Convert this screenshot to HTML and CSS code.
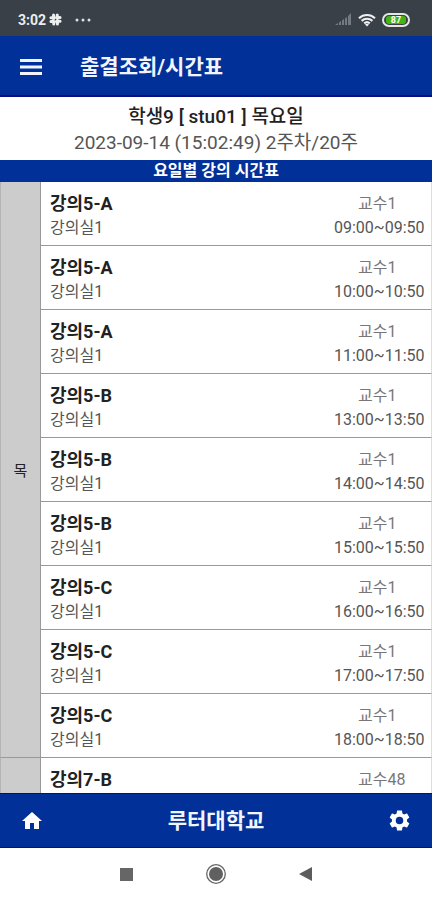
FILE: index.html
```html
<!DOCTYPE html>
<html lang="ko">
<head>
<meta charset="utf-8">
<meta name="viewport" content="width=device-width, initial-scale=1">
<title>출결조회/시간표</title>
<link rel="stylesheet" href="styles.css">
</head>
<body>
<div class="app">
  <div class="status">
    <span class="clock">3:02</span>
    <svg class="slack" viewBox="0 0 12 12" width="13" height="13" fill="none" stroke="#eceef0" stroke-width="2.8" stroke-linecap="round"><path d="M4.2 1.8v3.4M1.8 4.4h2.600M7.800 6.800v3.400M7.800 7.600h2.400M6.800 4.200h3.400M7.600 1.800v2.400M1.800 7.800h3.400M4.400 7.800v2.400"/></svg>
    <svg class="dots" viewBox="0 0 16 4" width="16" height="4" fill="#dfe2e4"><circle cx="2" cy="2" r="1.5"/><circle cx="8" cy="2" r="1.5"/><circle cx="14" cy="2" r="1.5"/></svg>
    <span class="indicators">
      <svg viewBox="0 0 17 13" width="17" height="13" fill="#747b80"><path d="M0 12l3-2v2zM4 9.500l2-1.500v4H4zM7 7.500l2-1.500v6H7zM10 5.500l2-1.500v8h-2zM13 3l3-3v12h-3z"/></svg>
      <svg viewBox="0 0 18 14" width="18" height="14" fill="none" stroke="#eef0f1" stroke-width="2.100"><path d="M1 5.200c4.600-4.200 11.400-4.200 16 0M3.600 7.900c3.100-2.800 7.700-2.800 10.800 0M6.200 10.400c1.600-1.400 4-1.400 5.600 0"/><path d="M9 13.500l-2-2c1.200-1 2.800-1 4 0z" fill="#eef0f1" stroke="none"/></svg>
      <span class="battery"><span class="charge">87</span></span>
    </span>
  </div>
  <header class="topbar">
    <button class="icon-button" type="button" aria-label="메뉴"><svg viewBox="0 0 22 16" width="22" height="16" fill="#f2f5ff"><path d="M0 0h22v3H0zM0 6.500h22v3H0zM0 13h22v3H0z"/></svg></button>
    <h1>출결조회/시간표</h1>
  </header>
  <main>
    <section class="student">
      <p class="name">학생9 [ stu01 ] 목요일</p>
      <p class="date">2023-09-14 (15:02:49) 2주차/20주</p>
    </section>
    <h2>요일별 강의 시간표</h2>
    <div class="schedule">
    <table>
      <tbody>
        <tr><th scope="rowgroup" rowspan="9"><span class="day">목</span></th><td><div class="lecture"><div><b>강의5-A</b><span>강의실1</span></div><div class="when"><span class="prof">교수1</span><span>09:00~09:50</span></div></div></td></tr>
        <tr><td><div class="lecture"><div><b>강의5-A</b><span>강의실1</span></div><div class="when"><span class="prof">교수1</span><span>10:00~10:50</span></div></div></td></tr>
        <tr><td><div class="lecture"><div><b>강의5-A</b><span>강의실1</span></div><div class="when"><span class="prof">교수1</span><span>11:00~11:50</span></div></div></td></tr>
        <tr><td><div class="lecture"><div><b>강의5-B</b><span>강의실1</span></div><div class="when"><span class="prof">교수1</span><span>13:00~13:50</span></div></div></td></tr>
        <tr><td><div class="lecture"><div><b>강의5-B</b><span>강의실1</span></div><div class="when"><span class="prof">교수1</span><span>14:00~14:50</span></div></div></td></tr>
        <tr><td><div class="lecture"><div><b>강의5-B</b><span>강의실1</span></div><div class="when"><span class="prof">교수1</span><span>15:00~15:50</span></div></div></td></tr>
        <tr><td><div class="lecture"><div><b>강의5-C</b><span>강의실1</span></div><div class="when"><span class="prof">교수1</span><span>16:00~16:50</span></div></div></td></tr>
        <tr><td><div class="lecture"><div><b>강의5-C</b><span>강의실1</span></div><div class="when"><span class="prof">교수1</span><span>17:00~17:50</span></div></div></td></tr>
        <tr><td><div class="lecture"><div><b>강의5-C</b><span>강의실1</span></div><div class="when"><span class="prof">교수1</span><span>18:00~18:50</span></div></div></td></tr>
      </tbody>
      <tbody>
        <tr><th scope="rowgroup"></th><td><div class="lecture"><div><b>강의7-B</b></div><div class="when"><span class="prof">교수48</span></div></div></td></tr>
      </tbody>
    </table>
    </div>
  </main>
  <footer class="bottombar">
    <button class="icon-button" type="button" aria-label="홈"><svg viewBox="2 3 20 17" width="20" height="17" fill="#fff"><path d="M10 20v-6h4v6h5v-8h3L12 3 2 12h3v8z"/></svg></button>
    <strong>루터대학교</strong>
    <button class="icon-button" type="button" aria-label="설정"><svg viewBox="2 2 20 20" width="21" height="21" fill="#fff"><path d="M19.140 12.940c.04-.3.060-.61.060-.94 0-.32-.02-.64-.07-.94l2.030-1.580c.18-.14.230-.41.120-.61l-1.920-3.320c-.12-.22-.37-.29-.59-.22l-2.390.96c-.5-.38-1.030-.7-1.620-.94l-.36-2.540c-.04-.24-.24-.41-.48-.41h-3.840c-.24 0-.43.170-.47.410l-.36 2.540c-.59.240-1.130.570-1.620.940l-2.390-.96c-.22-.08-.47 0-.59.220L2.740 8.870c-.12.210-.08.470.120.610l2.030 1.580c-.05.300-.09.630-.09.940s.02.640.070.940l-2.030 1.580c-.18.140-.23.410-.12.610l1.920 3.320c.12.220.37.290.590.220l2.390-.96c.5.380 1.030.7 1.620.940l.36 2.540c.05.240.240.410.480.410h3.840c.24 0 .44-.17.470-.41l.36-2.540c.59-.24 1.130-.56 1.620-.94l2.390.96c.22.080.470 0 .590-.22l1.920-3.320c.12-.22.070-.47-.12-.61l-2.010-1.580zM12 15.600a3.600 3.600 0 1 1 0-7.200 3.600 3.600 0 0 1 0 7.200z"/></svg></button>
  </footer>
  <nav class="system" aria-label="시스템 탐색">
    <button type="button" aria-label="최근 앱"><svg viewBox="0 0 14 14" width="14" height="14"><path d="M1 1h13v13H1z" fill="#666"/></svg></button>
    <button type="button" aria-label="홈 화면"><svg viewBox="0 0 22 22" width="22" height="22"><circle cx="11" cy="11" r="9.300" fill="none" stroke="#666" stroke-width="1.300"/><circle cx="11" cy="11" r="7" fill="#606060"/></svg></button>
    <button type="button" aria-label="뒤로"><svg viewBox="0 0 14 14" width="14" height="14"><path d="M0 7l13-7v14z" fill="#5c5c5c"/></svg></button>
  </nav>
</div>
</body>
</html>
```
FILE: styles.css
```css
* { box-sizing: border-box; }

body {
  margin: 0;
  background: #fff;
  color: #222;
  font-family: Roboto, "Noto Sans CJK KR", sans-serif;
}

h1, h2, p { margin: 0; }

button {
  display: flex;
  align-items: center;
  justify-content: center;
  padding: 0;
  border: 0;
  background: none;
}

svg { display: block; }

.app {
  display: flex;
  flex-direction: column;
  height: 100vh;
}

.status {
  flex: none;
  display: flex;
  align-items: center;
  height: 36px;
  padding: 3px 22px 0 18px;
  background: #394047;
  color: #eceef0;
}

.clock { font-size: 14px; font-weight: 700; }
.slack { margin-left: 3px; }
.dots { margin-left: 13px; }

.indicators {
  display: flex;
  align-items: center;
  gap: 6px;
  margin-left: auto;
}

.battery {
  display: block;
  width: 28px;
  height: 14px;
  padding: 1px;
  border: 2px solid #e4e8e4;
  border-radius: 7px;
}

.charge {
  display: block;
  width: 20px;
  margin: 0 auto;
  border-radius: 3px;
  background: #42b414;
  color: #fff;
  font-size: 9px;
  font-weight: 700;
  line-height: 8px;
  text-align: center;
}

.topbar {
  flex: none;
  display: flex;
  align-items: center;
  gap: 28px;
  height: 61px;
  padding: 2px 0 0 10px;
  border-bottom: 2px solid #001080;
  background: #003098;
  color: #f2f5ff;
}

.icon-button {
  width: 42px;
  height: 42px;
}

h1 { font-size: 21px; font-weight: 700; line-height: 28px; }

main {
  flex: 1;
  min-height: 0;
  display: flex;
  flex-direction: column;
}

.student {
  padding: 7px 0 4px;
  text-align: center;
  font-size: 19px;
  line-height: 26px;
}

.name { font-weight: 500; }
.date { color: #555; }

h2 {
  flex: none;
  background: #003098;
  color: #fff;
  font-size: 16px;
  font-weight: 700;
  line-height: 22px;
  text-align: center;
}

.schedule {
  flex: 1;
  min-height: 0;
  overflow: hidden;
}

table {
  width: 100%;
  border-spacing: 0;
}

th, td {
  padding: 0;
  border-bottom: 1px solid #999;
}

th {
  width: 41px;
  border-right: 1px solid #999;
  border-left: 1px solid #b4b4b4;
  background: #ccc;
}

td { height: 64px; border-right: 1px solid #ddd; }

.day {
  font-size: 15px;
  font-weight: 400;
}

.lecture {
  display: flex;
  justify-content: space-between;
  height: 63px;
  padding: 10px 7px 0 9px;
}

.lecture b, .lecture span { display: block; line-height: 24px; }
.lecture b { font-size: 18px; font-weight: 700; }
.lecture span { color: #555; font-size: 16px; }
.when { width: 90px; }
.when .prof { padding-left: 24px; color: #777; }

.bottombar {
  flex: none;
  display: flex;
  align-items: center;
  justify-content: space-between;
  height: 55px;
  padding: 0 11px;
  border-top: 1px solid #001080;
  border-bottom: 1px solid #001080;
  background: #003098;
  color: #f2f5ff;
}

.bottombar strong { font-size: 21px; line-height: 28px; }

.system {
  flex: none;
  display: flex;
  align-items: center;
  justify-content: center;
  gap: 46px;
  height: 52px;
}

.system button { width: 44px; height: 44px; }
```
